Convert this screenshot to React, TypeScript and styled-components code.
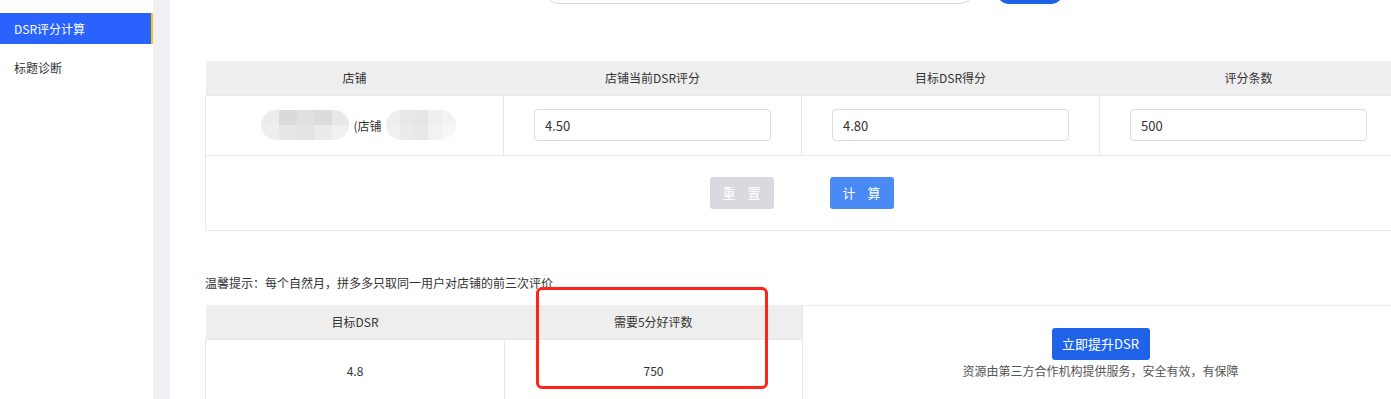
import React from "react";
import styled, { createGlobalStyle } from "styled-components";

const Global = createGlobalStyle`
  html, body { margin: 0; padding: 0; overflow: hidden; }
  body {
    font-family: "Microsoft YaHei", "Noto Sans CJK SC", "Noto Sans", sans-serif;
    color: #333;
    background: #eef0f4;
  }
  * { box-sizing: border-box; }
`;

const Layout = styled.div`
  display: flex;
  min-height: 100vh;
  background: #eef0f4;
`;

const Sidebar = styled.nav`
  width: 153px;
  flex: none;
  background: #fff;
  padding-top: 13px;
  display: flex;
  flex-direction: column;
  gap: 8px;
`;

const NavItem = styled.div<{ $active?: boolean }>`
  height: 31px;
  display: flex;
  align-items: center;
  padding-left: 14px;
  font-size: 12px;
  color: ${(p) => (p.$active ? "#fff" : "#333")};
  background: ${(p) => (p.$active ? "#2962ff" : "transparent")};
  border-right: 2px solid ${(p) => (p.$active ? "#f5c518" : "transparent")};
`;

const Main = styled.main`
  flex: 1;
  margin-left: 17px;
  background: #fff;
  padding-left: 35px;
  overflow: hidden;
`;

const Inner = styled.div`
  width: 1193px;
  position: relative;
`;

const SearchRow = styled.div`
  display: flex;
  justify-content: center;
  gap: 21px;
  margin-top: -32px;
  margin-bottom: 57px;
  height: 36px;
`;

const SearchInput = styled.div`
  width: 435px;
  height: 36px;
  border: 1px solid #d9d9d9;
  border-radius: 18px;
  background: #fff;
`;

const SearchButton = styled.div`
  width: 64px;
  height: 36px;
  border-radius: 10px;
  background: #1e62e6;
`;

const Table = styled.table`
  width: 1193px;
  border-collapse: collapse;
  table-layout: fixed;
  font-size: 12px;
  color: #333;
`;

const Th = styled.th`
  height: 34px;
  background: #eeeeee;
  font-weight: normal;
  text-align: center;
  padding: 0;
`;

const Td = styled.td<{ $h?: number }>`
  height: ${(p) => p.$h ?? 60}px;
  border: 1px solid #e8e8e8;
  text-align: center;
  padding: 0 30px;
  vertical-align: middle;
`;

const SideCell = styled.td`
  border-top: 1px solid #ececec;
  border-left: 1px solid #e8e8e8;
  text-align: center;
  vertical-align: middle;
  padding: 0;
`;

const Field = styled.input`
  width: 100%;
  height: 32px;
  border: 1px solid #dcdcdc;
  border-radius: 4px;
  padding: 0 10px;
  font-family: inherit;
  font-size: 13px;
  color: #333;
  outline: none;
`;

const ShopName = styled.div`
  display: flex;
  align-items: center;
  justify-content: center;
  gap: 4px;
  padding-left: 8px;
  font-size: 12px;
  color: #333;
`;

const Blur = styled.div<{ $w: number }>`
  width: ${(p) => p.$w}px;
  height: 30px;
  border-radius: 15px;
  overflow: hidden;
  display: grid;
  grid-template-columns: repeat(5, 1fr);
  grid-template-rows: 1fr 1fr;
`;

const Pix = styled.span<{ $c: string }>`
  background: ${(p) => p.$c};
`;

const ButtonRow = styled.div`
  display: flex;
  justify-content: center;
  gap: 56px;
`;

const ActionButton = styled.button<{ $primary?: boolean }>`
  width: 64px;
  height: 32px;
  padding: 0 0 0 12px;
  border: none;
  border-radius: 3px;
  font-family: inherit;
  font-size: 13px;
  color: #fff;
  white-space: nowrap;
  letter-spacing: 12px;
  background: ${(p) => (p.$primary ? "#4a8af4" : "#d8dadf")};
`;

const Tip = styled.p`
  margin: 43px 0 14px;
  font-size: 12px;
  line-height: 17px;
  color: #333;
`;

const Table2Wrap = styled.div`
  position: relative;
`;

const PromoButton = styled.button`
  width: 98px;
  height: 32px;
  border: none;
  border-radius: 3px;
  background: #1f63e8;
  color: #fff;
  font-family: inherit;
  font-size: 13px;
`;

const PromoNote = styled.div`
  margin-top: 2px;
  font-size: 12px;
  color: #555;
  line-height: 17px;
`;

const Highlight = styled.div`
  position: absolute;
  left: 331px;
  top: -18px;
  width: 232px;
  height: 102px;
  border: 3px solid #ff2418;
  border-radius: 6px;
  pointer-events: none;
`;

const blob1 = ["#ececec", "#dadada", "#e0e0e0", "#dcdcdc", "#e8e8e8", "#eeeeee", "#e7e7e7", "#e4e4e4", "#ebebeb", "#f0f0f0"];
const blob2 = ["#eeeeee", "#e9e7e7", "#e6e6e6", "#efefef", "#f3f3f3", "#f1f1f1", "#ebebeb", "#e8e8e8", "#f2f2f2", "#f7f7f7"];

export default function App() {
  return (
    <>
      <Global />
      <Layout>
        <Sidebar>
          <NavItem $active>DSR评分计算</NavItem>
          <NavItem>标题诊断</NavItem>
        </Sidebar>
        <Main>
          <Inner>
            <SearchRow>
              <SearchInput />
              <SearchButton />
            </SearchRow>
            <Table>
              <thead>
                <tr>
                  <Th>店铺</Th>
                  <Th>店铺当前DSR评分</Th>
                  <Th>目标DSR得分</Th>
                  <Th>评分条数</Th>
                </tr>
              </thead>
              <tbody>
                <tr>
                  <Td>
                    <ShopName>
                      <Blur $w={88}>
                        {blob1.map((c, i) => (
                          <Pix key={i} $c={c} />
                        ))}
                      </Blur>
                      <span>(店铺</span>
                      <Blur $w={70}>
                        {blob2.map((c, i) => (
                          <Pix key={i} $c={c} />
                        ))}
                      </Blur>
                    </ShopName>
                  </Td>
                  <Td>
                    <Field defaultValue="4.50" />
                  </Td>
                  <Td>
                    <Field defaultValue="4.80" />
                  </Td>
                  <Td>
                    <Field defaultValue="500" />
                  </Td>
                </tr>
                <tr>
                  <Td colSpan={4} $h={75}>
                    <ButtonRow>
                      <ActionButton>重置</ActionButton>
                      <ActionButton $primary>计算</ActionButton>
                    </ButtonRow>
                  </Td>
                </tr>
              </tbody>
            </Table>
            <Tip>温馨提示：每个自然月，拼多多只取同一用户对店铺的前三次评价</Tip>
            <Table2Wrap>
              <Table>
                <colgroup>
                  <col style={{ width: 299 }} />
                  <col style={{ width: 298 }} />
                  <col />
                </colgroup>
                <tbody>
                  <tr>
                    <Th>目标DSR</Th>
                    <Th>需要5分好评数</Th>
                    <SideCell rowSpan={2}>
                      <PromoButton>立即提升DSR</PromoButton>
                      <PromoNote>资源由第三方合作机构提供服务，安全有效，有保障</PromoNote>
                    </SideCell>
                  </tr>
                  <tr>
                    <Td $h={62}>4.8</Td>
                    <Td $h={62}>750</Td>
                  </tr>
                </tbody>
              </Table>
              <Highlight />
            </Table2Wrap>
          </Inner>
        </Main>
      </Layout>
    </>
  );
}
